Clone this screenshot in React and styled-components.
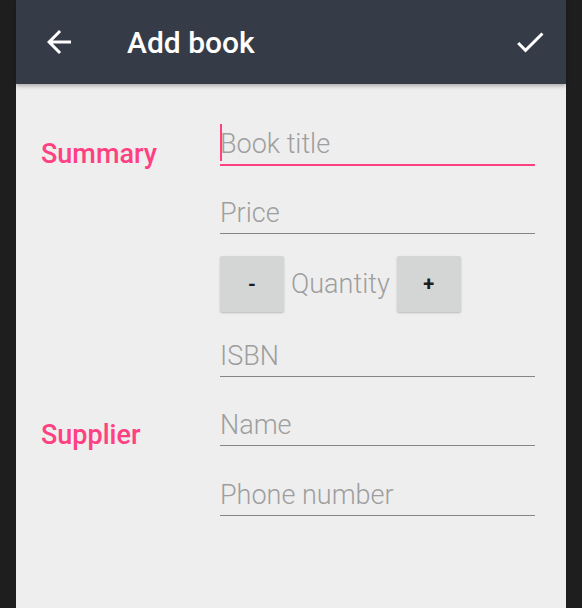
import styled, { createGlobalStyle } from "styled-components";

const Global = createGlobalStyle`
  html, body {
    margin: 0;
    padding: 0;
    background-color: #1e1e1e;
  }
  body {
    font-family: Roboto, "Liberation Sans", sans-serif;
  }
`;

const Screen = styled.div`
  width: 550px;
  min-height: 608px;
  margin-left: 16px;
  background-color: #eeeeee;
`;

const AppBar = styled.header`
  height: 84px;
  box-sizing: border-box;
  display: flex;
  align-items: center;
  padding: 0 18px 0 25px;
  background-color: #363c47;
  box-shadow: 0 2px 4px rgba(0, 0, 0, 0.28);
  position: relative;
  z-index: 1;
`;

const IconButton = styled.button`
  width: 36px;
  height: 36px;
  padding: 0;
  border: none;
  background: none;
  display: flex;
  align-items: center;
  justify-content: center;
  color: #ffffff;
  svg {
    width: 36px;
    height: 36px;
    fill: currentColor;
  }
`;

const Title = styled.h1`
  flex: 1;
  margin: 0 0 0 50px;
  color: #ffffff;
  font-size: 30px;
  font-weight: 500;
`;

const Form = styled.form`
  display: flex;
  flex-direction: column;
  gap: 31px;
  padding: 43px 31px 0 25px;
`;

const Section = styled.section`
  display: grid;
  grid-template-columns: 179px 315px;
`;

const Label = styled.h2`
  margin: 0;
  padding-top: 11px;
  color: #ff4081;
  font-size: 27px;
  font-weight: 500;
`;

const Fields = styled.div`
  display: flex;
  flex-direction: column;
  gap: ${(p) => p.$gap || 30}px;
`;

const Field = styled.label`
  position: relative;
  display: block;
  border-bottom: ${(p) => (p.$focused ? "2px solid #ff4081" : "1px solid #858585")};
`;

const Input = styled.input`
  display: block;
  width: 100%;
  height: 37px;
  box-sizing: border-box;
  padding: 0 0 3px;
  border: none;
  background: transparent;
  outline: none;
  font-family: Roboto, "Liberation Sans", sans-serif;
  font-size: 27px;
  font-weight: 300;
  color: #333333;
  &::placeholder {
    color: #9e9e9e;
  }
`;

const Caret = styled.span`
  position: absolute;
  left: 0;
  top: -3px;
  width: 2px;
  height: 37px;
  background-color: #ff4081;
`;

const QuantityRow = styled.div`
  display: flex;
  align-items: center;
  gap: 7px;
  margin: -8px 0 -3px;
`;

const StepButton = styled.button`
  width: 64px;
  height: 56px;
  border: none;
  border-radius: 2px;
  background-color: #d4d5d5;
  box-shadow: 0 1px 2px rgba(0, 0, 0, 0.22);
  font-family: Roboto, "Liberation Sans", sans-serif;
  font-size: 20px;
  font-weight: 700;
  color: #1c1c1c;
`;

const QuantityText = styled.span`
  font-size: 27px;
  font-weight: 300;
  color: #9e9e9e;
`;

function BackIcon() {
  return (
    <svg viewBox="0 0 24 24">
      <path d="M20 11H7.83l5.59-5.59L12 4l-8 8 8 8 1.41-1.41L7.83 13H20v-2z" />
    </svg>
  );
}

function CheckIcon() {
  return (
    <svg viewBox="0 0 24 24">
      <path d="M9 16.17L4.83 12l-1.42 1.41L9 19 21 7l-1.41-1.41z" />
    </svg>
  );
}

function App() {
  return (
    <>
      <Global />
      <Screen>
        <AppBar>
          <IconButton aria-label="Back">
            <BackIcon />
          </IconButton>
          <Title>Add book</Title>
          <IconButton aria-label="Save">
            <CheckIcon />
          </IconButton>
        </AppBar>

        <Form>
          <Section>
            <Label>Summary</Label>
            <Fields>
              <Field $focused>
                <Input placeholder="Book title" />
                <Caret />
              </Field>
              <Field>
                <Input placeholder="Price" />
              </Field>
              <QuantityRow>
                <StepButton type="button">-</StepButton>
                <QuantityText>Quantity</QuantityText>
                <StepButton type="button">+</StepButton>
              </QuantityRow>
              <Field>
                <Input placeholder="ISBN" />
              </Field>
            </Fields>
          </Section>

          <Section>
            <Label>Supplier</Label>
            <Fields $gap={32}>
              <Field>
                <Input placeholder="Name" />
              </Field>
              <Field>
                <Input placeholder="Phone number" />
              </Field>
            </Fields>
          </Section>
        </Form>
      </Screen>
    </>
  );
}

export default App;
